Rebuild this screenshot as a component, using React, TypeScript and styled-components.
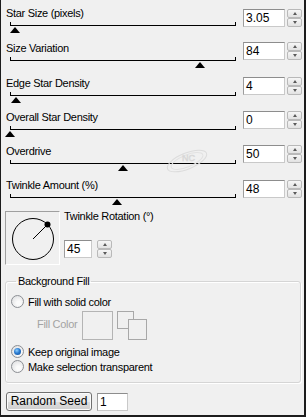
import React from "react";
import styled, { createGlobalStyle } from "styled-components";

const GlobalStyle = createGlobalStyle`
  html, body {
    margin: 0;
    padding: 0;
    background: #f0f0f0;
  }
  body {
    font-family: "Liberation Sans", Arial, sans-serif;
    font-size: 11px;
    color: #000;
  }
`;

const Panel = styled.div`
  position: relative;
  width: 306px;
  height: 417px;
  box-sizing: border-box;
  border-left: 1px solid #1c1c1c;
  border-right: 2px solid #1c1c1c;
  border-bottom: 2px solid #1c1c1c;
  background: #f0f0f0;
  overflow: hidden;
  display: flex;
  flex-direction: column;
`;

const SliderRow = styled.div<{ $h: number }>`
  height: ${(p) => p.$h}px;
  display: flex;
  align-items: flex-start;
`;

const SliderCol = styled.div`
  width: 242px;
  box-sizing: border-box;
  padding: 7px 0 0 5px;
`;

const Label = styled.div`
  height: 13px;
  line-height: 13px;
  letter-spacing: -0.3px;
  white-space: nowrap;
`;

const Track = styled.div`
  position: relative;
  margin: 2px 0 0 4px;
  width: 226px;
  height: 4px;
  box-sizing: border-box;
  border: 1px solid #000;
  border-top: none;
`;

const Thumb = styled.div<{ $x: number }>`
  position: absolute;
  top: 5px;
  left: ${(p) => p.$x - 6}px;
  width: 0;
  height: 0;
  border-left: 5.5px solid transparent;
  border-right: 5.5px solid transparent;
  border-bottom: 6px solid #000;
`;

const NumberField = styled.div<{ $w: number }>`
  width: ${(p) => p.$w}px;
  height: 18px;
  box-sizing: border-box;
  background: #fff;
  border: 1px solid #c9c9c9;
  border-top-color: #8d8d8d;
  border-left-color: #9d9d9d;
  padding-left: 2px;
  font-size: 12px;
  line-height: 16px;
  white-space: nowrap;
`;

const NumberGroup = styled.div<{ $top: number; $gap?: number }>`
  display: flex;
  align-items: flex-start;
  gap: ${(p) => p.$gap ?? 2}px;
  margin-top: ${(p) => p.$top}px;
`;

const Spinner = styled.div`
  display: flex;
  flex-direction: column;
  width: 15px;
  height: 18px;
`;

const SpinButton = styled.div<{ $down?: boolean }>`
  flex: 1;
  display: flex;
  align-items: center;
  justify-content: center;
  box-sizing: border-box;
  border: 1px solid #b9b9b9;
  border-radius: 2px;
  background: linear-gradient(#f6f6f6, #e2e2e2);

  &::after {
    content: "";
    width: 0;
    height: 0;
    border-left: 2.5px solid transparent;
    border-right: 2.5px solid transparent;
    ${(p) =>
      p.$down
        ? "border-top: 3px solid #5a5a5a;"
        : "border-bottom: 3px solid #5a5a5a;"}
  }
`;

const DialRow = styled.div`
  display: flex;
  align-items: flex-start;
  margin: 5px 0 0 4px;
`;

const DialBox = styled.div`
  width: 55px;
  height: 54px;
  box-sizing: border-box;
  border: 1px solid #fff;
  border-top-color: #a0a0a0;
  border-left-color: #a0a0a0;
  display: flex;
  align-items: center;
  justify-content: center;
`;

const DialSide = styled.div`
  margin: -2px 0 0 4px;
  display: flex;
  flex-direction: column;
  gap: 17px;
`;

const PlainLabel = styled.div`
  line-height: 14px;
  letter-spacing: -0.3px;
  white-space: nowrap;
`;

const Group = styled.fieldset`
  margin: 9px 0 0 4px;
  width: 296px;
  box-sizing: border-box;
  padding: 6px 0 8px 5px;
  border: 1px solid #d5d5d5;
  border-radius: 3px;
  box-shadow: inset 1px 1px 0 #fff, 1px 1px 0 #fff;
  min-width: 0;
`;

const Legend = styled.legend`
  padding: 0 2px;
  margin-left: 5px;
  line-height: 14px;
  letter-spacing: -0.3px;
`;

const OptionRow = styled.div<{ $gap?: number }>`
  display: flex;
  align-items: center;
  gap: 4px;
  height: 15px;
  margin-top: ${(p) => p.$gap ?? 0}px;
  letter-spacing: -0.3px;
  white-space: nowrap;
`;

const Radio = styled.span<{ $on?: boolean }>`
  position: relative;
  width: 13px;
  height: 13px;
  box-sizing: border-box;
  border-radius: 50%;
  border: 1px solid #8c8f94;
  background: radial-gradient(circle at 60% 65%, #fbfbfb 20%, #d9dadc 100%);

  &::after {
    content: "";
    display: ${(p) => (p.$on ? "block" : "none")};
    position: absolute;
    left: 2px;
    top: 2px;
    width: 7px;
    height: 7px;
    border-radius: 50%;
    background: radial-gradient(circle at 40% 35%, #8fd0ff 0%, #2b7bd0 45%, #0f4c93 100%);
  }
`;

const FillRow = styled.div`
  display: flex;
  align-items: flex-start;
  height: 29px;
  margin-top: 2px;
  padding-left: 26px;
`;

const MutedLabel = styled.span`
  width: 45px;
  margin-top: 7px;
  color: #a3a3a3;
  letter-spacing: -0.3px;
  white-space: nowrap;
`;

const Swatch = styled.div`
  width: 31px;
  height: 29px;
  box-sizing: border-box;
  border: 1px solid #b4b4b4;
  background: #f0f0f0;
  margin-right: 4px;
`;

const BottomRow = styled.div`
  display: flex;
  align-items: center;
  gap: 5px;
  margin: 9px 0 0 5px;
`;

const Button = styled.div`
  width: 86px;
  height: 19px;
  box-sizing: border-box;
  border: 1px solid #707070;
  border-radius: 3px;
  background: linear-gradient(#f2f2f2 0%, #ebebeb 50%, #dddddd 51%, #cfcfcf 100%);
  box-shadow: inset 0 0 0 1px #fbfbfb;
  font-size: 12px;
  line-height: 17px;
  text-align: center;
  white-space: nowrap;
`;

const Watermark = styled.svg`
  position: absolute;
  left: 162px;
  top: 146px;
`;

const sliders = [
  { label: "Star Size (pixels)", value: "3.05", x: 5, h: 35, top: 9 },
  { label: "Size Variation", value: "84", x: 190, h: 35, top: 7 },
  { label: "Edge Star Density", value: "4", x: 6, h: 34, top: 7 },
  { label: "Overall Star Density", value: "0", x: 0, h: 34, top: 7 },
  { label: "Overdrive", value: "50", x: 113, h: 34, top: 7 },
  { label: "Twinkle Amount (%)", value: "48", x: 107, h: 34, top: 8 },
];

function Spin() {
  return (
    <Spinner>
      <SpinButton />
      <SpinButton $down />
    </Spinner>
  );
}

export default function App() {
  return (
    <>
      <GlobalStyle />
      <Panel>
        {sliders.map((s) => (
          <SliderRow key={s.label} $h={s.h}>
            <SliderCol>
              <Label>{s.label}</Label>
              <Track>
                <Thumb $x={s.x} />
              </Track>
            </SliderCol>
            <NumberGroup $top={s.top}>
              <NumberField $w={42}>{s.value}</NumberField>
              <Spin />
            </NumberGroup>
          </SliderRow>
        ))}

        <DialRow>
          <DialBox>
            <svg width="48" height="48" viewBox="0 0 48 48">
              <circle cx="24" cy="25" r="20.5" fill="none" stroke="#000" strokeWidth="1" />
              <line x1="24" y1="25" x2="38.5" y2="10.5" stroke="#000" strokeWidth="1" />
              <circle cx="38.5" cy="10.5" r="3" fill="#000" />
            </svg>
          </DialBox>
          <DialSide>
            <PlainLabel>Twinkle Rotation (°)</PlainLabel>
            <NumberGroup $top={0} $gap={5}>
              <NumberField $w={28}>45</NumberField>
              <Spin />
            </NumberGroup>
          </DialSide>
        </DialRow>

        <Group>
          <Legend>Background Fill</Legend>
          <OptionRow>
            <Radio />
            Fill with solid color
          </OptionRow>
          <FillRow>
            <MutedLabel>Fill Color</MutedLabel>
            <Swatch />
            <svg width="31" height="29" viewBox="0 0 31 29">
              <rect x="0.5" y="0.5" width="16" height="17" fill="#f0f0f0" stroke="#a8a8a8" />
              <rect x="11.5" y="8.5" width="18" height="20" fill="#f0f0f0" stroke="#a8a8a8" />
            </svg>
          </FillRow>
          <OptionRow $gap={4}>
            <Radio $on />
            Keep original image
          </OptionRow>
          <OptionRow>
            <Radio />
            Make selection transparent
          </OptionRow>
        </Group>

        <BottomRow>
          <Button>Random Seed</Button>
          <NumberField $w={31}>1</NumberField>
        </BottomRow>

        <Watermark width="48" height="30" viewBox="0 0 48 30">
          <ellipse cx="24" cy="15" rx="21" ry="8" transform="rotate(-22 24 15)" fill="none" stroke="#dcdcdc" />
          <ellipse cx="24" cy="15" rx="17" ry="6" transform="rotate(-22 24 15)" fill="none" stroke="#e2e2e2" />
          <text x="19" y="15" fontSize="9" fill="none" stroke="#d6d6d6" strokeWidth="0.6" fontFamily="Liberation Sans, sans-serif">NC</text>
        </Watermark>
      </Panel>
    </>
  );
}
